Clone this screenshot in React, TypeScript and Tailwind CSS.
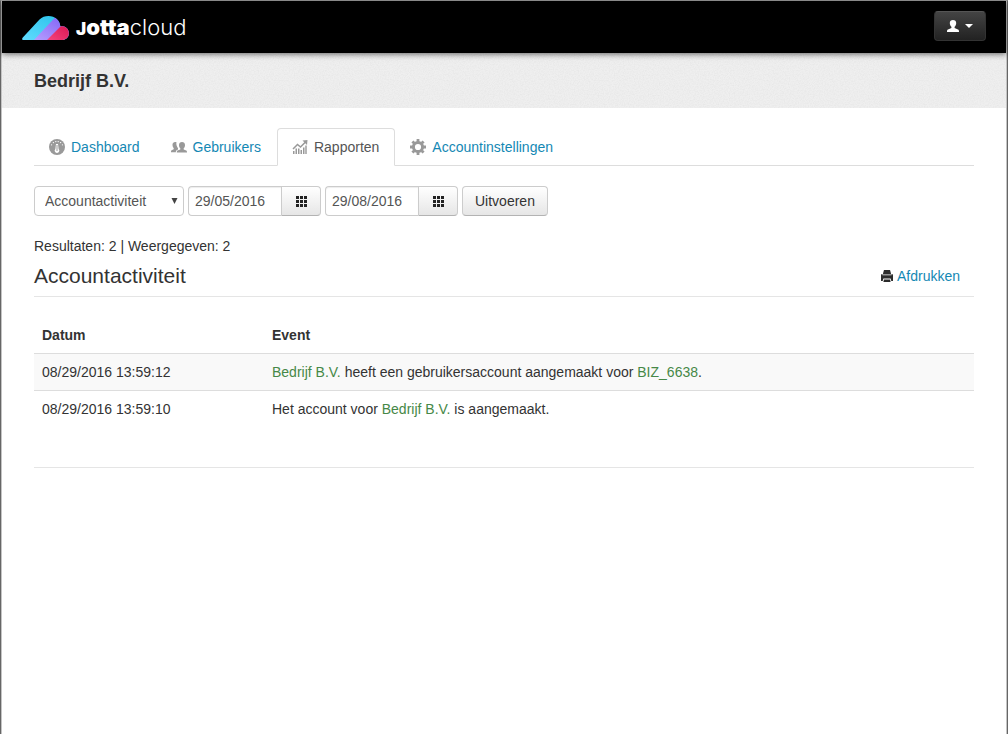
import type { ReactNode } from "react";

const accent = "text-[#1488b4] hover:underline";
const buttonFace =
  "border border-[#ccc] border-b-[#b3b3b3] bg-linear-to-b from-white to-[#e6e6e6] text-[#333] cursor-pointer";

function Cloud() {
  return (
    <svg width="48" height="26" viewBox="0 0 48 26" aria-hidden="true">
      <defs>
        <linearGradient id="cyan" x1="0" y1="1" x2="1" y2="0">
          <stop offset="0" stopColor="#62dcff" />
          <stop offset="1" stopColor="#22bfe8" />
        </linearGradient>
        <linearGradient id="violet" x1="0" y1="1" x2="1" y2="0">
          <stop offset="0" stopColor="#b9a0ff" />
          <stop offset="1" stopColor="#7a5cf5" />
        </linearGradient>
        <linearGradient id="pink" x1="0" y1="1" x2="1" y2="0">
          <stop offset="0" stopColor="#f5467f" />
          <stop offset="1" stopColor="#d9124f" />
        </linearGradient>
        <clipPath id="cloud">
          <path d="M1.500 25 C0 25 -0.300 23.700 0.800 22.500 L17.500 4.500 C20 2 23 1 26.500 1 C33 1 38 5.500 38.300 11.500 C43 10.500 46.800 13.800 46.800 18.200 C46.800 22.500 43.500 25 39.500 25 Z" />
        </clipPath>
      </defs>
      <g clipPath="url(#cloud)">
        <path d="M0 0H48V26H0Z" fill="url(#cyan)" />
        <path d="M11 26L34.500 1L48 1V26Z" fill="url(#violet)" />
        <path d="M24 26L38 12L42 8H48V26Z" fill="url(#pink)" />
      </g>
    </svg>
  );
}

function GaugeIcon() {
  return (
    <svg width="16" height="16" viewBox="0 0 16 16" aria-hidden="true">
      <circle cx="8" cy="8" r="8" fill="#999" />
      <g fill="#fff">
        <circle cx="2.600" cy="5.800" r=".6" />
        <circle cx="4.400" cy="3.600" r=".7" />
        <circle cx="6.800" cy="2.600" r=".7" />
        <circle cx="9.200" cy="2.600" r=".7" />
        <circle cx="11.600" cy="3.600" r=".7" />
        <circle cx="13.400" cy="5.800" r=".6" />
        <path d="M7 5h2l.6 5a2.300 2.300 0 1 1-3.200 0z" />
      </g>
      <path d="M7.500 6h1v6h-1z" fill="#999" />
    </svg>
  );
}

function UsersIcon() {
  return (
    <svg width="16" height="16" viewBox="0 0 16 16" fill="#999" aria-hidden="true">
      <path d="M5.500 3.300c-1.700-1-4-.1-4 2.100 0 1.700.5 2.800 1.200 3.500v1.300l-2.100 1c-.5.300-.6.900-.6 2.100h4.800c0-1.500.7-2 2.200-2.700V9.200c-1.200-1.500-2.100-4-1.500-5.900z" />
      <path d="M11 3c1.800 0 3 1 3 2.900 0 1.600-.5 2.700-1.300 3.400v1.200l2.500 1.100c.7.300.8.900.8 2H5.800c0-1.100.1-1.700.8-2l2.700-1.100V9.300C8.500 8.600 8 7.500 8 5.900 8 4 9.200 3 11 3z" />
    </svg>
  );
}

function ReportIcon() {
  return (
    <svg width="16" height="16" viewBox="0 0 16 16" aria-hidden="true">
      <path d="M1 10L5.500 5.500L8.500 8L14 2.500" fill="none" stroke="#999" strokeWidth="1.500" />
      <path d="M10.500 1.500L15.500 1L15 6Z" fill="#999" />
      <path
        d="M1 12h1.500v3H1zM3.500 9.500H5V15H3.500zM6 9.500h1.500V15H6zM8.500 11H10v4H8.500zM11 8.500h1.500V15H11zM13.300 6.500h1.400V15h-1.400z"
        fill="#999"
      />
    </svg>
  );
}

function GearIcon() {
  return (
    <svg width="16" height="16" viewBox="0 0 16 16" fill="none" stroke="#999" aria-hidden="true">
      <circle cx="8" cy="8" r="4.600" strokeWidth="3" />
      <path
        d="M8 0V3M8 13V16M0 8H3M13 8H16M2.400 2.400L4.300 4.300M11.700 11.700L13.600 13.600M13.600 2.400L11.700 4.300M4.300 11.700L2.400 13.600"
        strokeWidth="2.800"
      />
    </svg>
  );
}

function GridIcon() {
  return (
    <svg width="11" height="11" viewBox="0 0 11 11" fill="#222" aria-hidden="true">
      <path d="M0 0h3v3H0zM4 0h3v3H4zM8 0h3v3H8zM0 4h3v3H0zM4 4h3v3H4zM8 4h3v3H8zM0 8h3v3H0zM4 8h3v3H4zM8 8h3v3H8z" />
    </svg>
  );
}

function PrinterIcon() {
  return (
    <svg width="12" height="12" viewBox="0 0 12 12" fill="#2b2b2b" aria-hidden="true">
      <path d="M3 0h6l1 3.500v1H2v-1z" />
      <path d="M1.500 4v1.300h9V4c.9 0 1.500.5 1.500 1.400V11h-1.700L9.600 8.500H2.400L1.700 11H0V5.400C0 4.500.6 4 1.500 4z" />
      <path d="M3 9.500h6l.6 2.500H2.400z" />
    </svg>
  );
}

function PersonIcon() {
  return (
    <svg width="12" height="12" viewBox="0 0 12 12" fill="#fff" aria-hidden="true">
      <path d="M6 0c2 0 3.200 1 3.200 3 0 1.900-.8 3.100-1.600 3.800v1.300l3.400 1.500c.8.300 1 .9 1 2.400H0c0-1.500.2-2.100 1-2.400l3.400-1.500V6.800C3.600 6.100 2.800 4.900 2.800 3 2.800 1 4 0 6 0z" />
    </svg>
  );
}

function Grain() {
  return (
    <svg className="pointer-events-none absolute inset-0 size-full opacity-15" aria-hidden="true">
      <filter id="grain">
        <feTurbulence type="fractalNoise" baseFrequency="0.8" numOctaves="2" />
        <feColorMatrix type="matrix" values="0 0 0 0 0.5  0 0 0 0 0.5  0 0 0 0 0.5  2 0 0 0 -0.7" />
      </filter>
      <rect width="100%" height="100%" filter="url(#grain)" />
    </svg>
  );
}

function Tab({ icon, label, active = false }: { icon: ReactNode; label: string; active?: boolean }) {
  return (
    <li className="-mb-px">
      <a
        href="#"
        aria-current={active ? "page" : undefined}
        className={
          active
            ? "flex h-[38px] items-center gap-1.5 rounded-t border border-[#ddd] border-b-white bg-white pr-[15px] pl-3.5 text-[#555]"
            : "flex h-[38px] items-center gap-1.5 border border-transparent pr-[15px] pl-3.5 text-[#1488b4]"
        }
      >
        {icon}
        {label}
      </a>
    </li>
  );
}

function DateField({ label, value }: { label: string; value: string }) {
  return (
    <div className="flex h-[30px]">
      <input
        type="text"
        aria-label={label}
        defaultValue={value}
        className="w-[93px] rounded-l border border-r-0 border-[#ccc] bg-white px-1.5 text-[#555] shadow-[inset_0_1px_1px_rgba(0,0,0,0.075)]"
      />
      <button
        type="button"
        aria-label={`${label} kiezen`}
        className={`flex w-10 items-center justify-center rounded-r ${buttonFace}`}
      >
        <GridIcon />
      </button>
    </div>
  );
}

const name = "text-[#468847]";

const events: { date: string; text: ReactNode }[] = [
  {
    date: "08/29/2016 13:59:12",
    text: (
      <>
        <span className={name}>Bedrijf B.V.</span> heeft een gebruikersaccount aangemaakt voor{" "}
        <span className={name}>BIZ_6638</span>.
      </>
    ),
  },
  {
    date: "08/29/2016 13:59:10",
    text: (
      <>
        Het account voor <span className={name}>Bedrijf B.V.</span> is aangemaakt.
      </>
    ),
  },
];

export default function App() {
  return (
    <div className="flex min-h-screen flex-col border-x border-t border-x-[#666] border-t-[#aaa] bg-white font-['Liberation_Sans',Arial,sans-serif] text-sm leading-5 text-[#333]">
      <div className="grow border-x border-[#c4c4c4]">
        <header className="relative z-10 flex h-[52px] items-center justify-between bg-black px-5 pb-0.5 shadow-[0_1px_6px_rgba(0,0,0,0.6)]">
          <a href="#" className="flex items-center gap-1.5 pt-1 text-white">
            <Cloud />
            <span className="font-[Inter,sans-serif] text-[22px] leading-6">
              <span className="font-black">
                <span className="text-[17px]">J</span>otta
              </span>
              <span className="font-light">cloud</span>
            </span>
          </a>
          <button
            type="button"
            aria-label="Account"
            className="flex h-[30px] w-[52px] cursor-pointer items-center justify-center gap-1.5 rounded border border-[#333] border-t-[#555] bg-linear-to-b from-[#444] to-[#222]"
          >
            <PersonIcon />
            <svg width="8" height="4" viewBox="0 0 8 4" aria-hidden="true">
              <path d="M0 0H8L4 4Z" fill="#fff" />
            </svg>
          </button>
        </header>

        <div className="relative flex h-[55px] items-center bg-[#efefef] px-8">
          <Grain />
          <h1 className="relative text-lg font-bold">Bedrijf B.V.</h1>
        </div>

        <main className="px-8 pt-5">
          <nav>
            <ul className="flex border-b border-[#ddd]">
              <Tab icon={<GaugeIcon />} label="Dashboard" />
              <Tab icon={<UsersIcon />} label="Gebruikers" />
              <Tab icon={<ReportIcon />} label="Rapporten" active />
              <Tab icon={<GearIcon />} label="Accountinstellingen" />
            </ul>
          </nav>

          <form className="mt-5 flex flex-wrap gap-1" onSubmit={(e) => e.preventDefault()}>
            <div className="relative h-[30px] w-[150px]">
              <select
                aria-label="Rapport"
                className="size-full appearance-none rounded border border-[#ccc] bg-white pl-2.5 text-[#555]"
              >
                <option>Accountactiviteit</option>
              </select>
              <svg
                className="pointer-events-none absolute top-3 right-1.5"
                width="7"
                height="6"
                viewBox="0 0 7 6"
                aria-hidden="true"
              >
                <path d="M0.500 0H6.500L3.500 6Z" fill="#444" />
              </svg>
            </div>
            <DateField label="Begindatum" value="29/05/2016" />
            <DateField label="Einddatum" value="29/08/2016" />
            <button type="submit" className={`h-[30px] rounded px-3 ${buttonFace}`}>
              Uitvoeren
            </button>
          </form>

          <p className="mt-5">Resultaten: 2 | Weergegeven: 2</p>

          <div className="flex items-center justify-between border-b border-[#e5e5e5] pr-3.5">
            <h2 className="text-[21px] leading-10">Accountactiviteit</h2>
            <a href="#" className={`flex items-center gap-1 ${accent}`}>
              <PrinterIcon />
              Afdrukken
            </a>
          </div>

          <table className="mt-5 w-full text-left">
            <thead>
              <tr>
                <th className="w-[230px] p-2 font-bold">Datum</th>
                <th className="p-2 font-bold">Event</th>
              </tr>
            </thead>
            <tbody>
              {events.map((event) => (
                <tr key={event.date} className="border-t border-[#ddd] odd:bg-[#f9f9f9]">
                  <td className="p-2">{event.date}</td>
                  <td className="p-2">{event.text}</td>
                </tr>
              ))}
            </tbody>
          </table>
          <hr className="mt-10 border-[#e5e5e5]" />
        </main>
      </div>
    </div>
  );
}
